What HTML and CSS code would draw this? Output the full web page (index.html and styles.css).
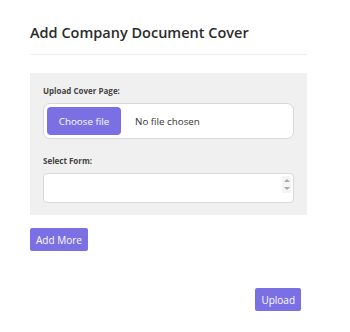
FILE: index.html
```html
<!DOCTYPE html>
<html lang="en">
<head>
    <meta charset="UTF-8">
    <meta name="viewport" content="width=device-width, initial-scale=1.0">
    <title>Add Company Document Cover</title>
    <link rel="stylesheet" href="styles.css">
</head>
<body>

<div class="page">
    <h2 class="title">Add Company Document Cover</h2>

    <section class="panel">
        <div class="field">
            <label class="field-label">Upload Cover Page:</label>
            <div class="file-input">
                <span class="file-btn">Choose file</span>
                <span class="file-name">No file chosen</span>
            </div>
        </div>

        <div class="field">
            <label class="field-label">Select Form:</label>
            <div class="listbox">
                <div class="listbox-body"></div>
                <div class="scrollbar">
                    <span class="arrow up"></span>
                    <span class="arrow down"></span>
                </div>
            </div>
        </div>
    </section>

    <button class="btn add-more">Add More</button>

    <div class="actions">
        <button class="btn">Upload</button>
    </div>
</div>

</body>
</html>
```

FILE: styles.css
```css
body {
    margin: 0;
    padding: 0;
    background-color: #fff;
    font-family: "Open Sans", "Noto Sans", sans-serif;
    color: #333;
}

.page {
    width: 277px;
    padding: 23px 0 0 30px;
}

.title {
    margin: 0;
    padding-bottom: 12px;
    font-size: 14.5px;
    font-weight: 600;
    color: #2b2b2b;
    border-bottom: 1px solid #eee;
}

.panel {
    margin-top: 18px;
    background-color: #f0f0f0;
    padding: 12px 13px 12px 13px;
}

.field {
    margin-bottom: 16px;
}

.field:last-child {
    margin-bottom: 0;
}

.field-label {
    display: block;
    font-size: 8px;
    font-weight: 700;
    color: #444;
    margin-bottom: 7px;
}

.file-input {
    display: flex;
    align-items: center;
    height: 36px;
    box-sizing: border-box;
    background: #fff;
    border: 1px solid #d8d8d8;
    border-radius: 7px;
    padding: 3px;
}

.file-btn {
    display: flex;
    align-items: center;
    justify-content: center;
    width: 74px;
    height: 28px;
    background-color: #7b70e3;
    color: #fff;
    border-radius: 4px;
    font-size: 9.8px;
}

.file-name {
    margin-left: 14px;
    font-size: 9.8px;
    color: #333;
}

.listbox {
    display: flex;
    height: 30px;
    box-sizing: border-box;
    background: #fff;
    border: 1px solid #d8d8d8;
    border-radius: 4px;
}

.listbox-body {
    flex: 1;
}

.scrollbar {
    width: 9px;
    height: 17px;
    margin: 2px 2px 0 0;
    background: #f4f4f4;
    display: flex;
    flex-direction: column;
    justify-content: space-between;
    align-items: center;
    padding: 3px 0;
    box-sizing: border-box;
}

.arrow {
    width: 0;
    height: 0;
    border-left: 3px solid transparent;
    border-right: 3px solid transparent;
}

.arrow.up {
    border-bottom: 3px solid #a8a8a8;
}

.arrow.down {
    border-top: 3px solid #a8a8a8;
}

.btn {
    display: block;
    background-color: #7b70e3;
    color: white;
    border: none;
    border-radius: 2px;
    font-family: "Open Sans", "Noto Sans", sans-serif;
    font-size: 10px;
    padding: 0 6px;
    height: 23px;
    cursor: pointer;
}

.add-more {
    margin-top: 13px;
}

.actions {
    display: flex;
    justify-content: flex-end;
    margin-top: 37px;
    padding-right: 6px;
}
```
